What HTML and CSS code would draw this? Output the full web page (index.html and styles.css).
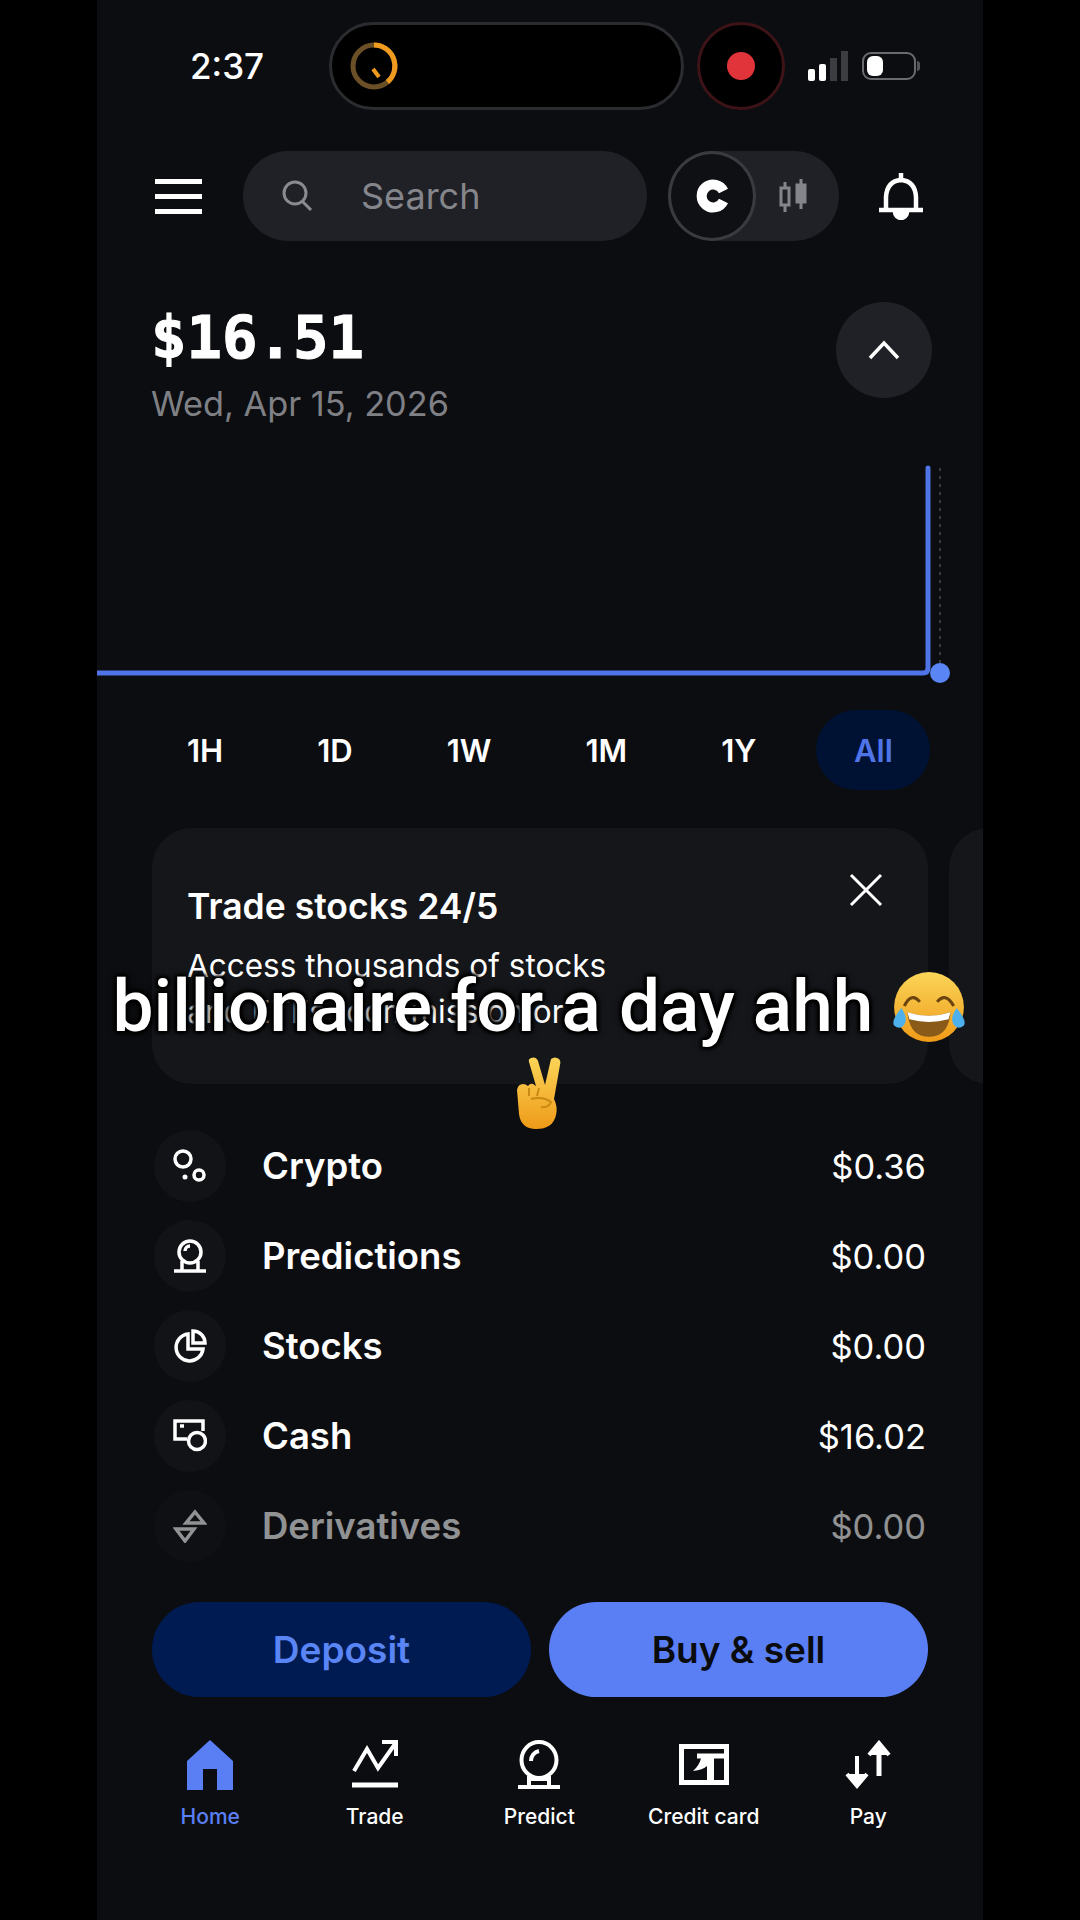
FILE: index.html
```html
<!DOCTYPE html>
<html lang="en">
<head>
  <meta charset="UTF-8">
  <meta name="viewport" content="width=device-width, initial-scale=1.0">
  <title>Home</title>
  <link rel="stylesheet" href="styles.css">
</head>
<body>
  <div class="screen">

    <div class="status">
      <span class="time">2:37</span>
      <div class="island">
        <svg class="ring" width="52" height="52" viewBox="0 0 52 52" fill="none">
          <circle cx="26" cy="26" r="21" stroke="#6b4f26" stroke-width="5"/>
          <path d="M26 5A21 21 0 0 1 39.5 42" stroke="#f09a1f" stroke-width="5"/>
          <path d="M25 29l6 8" stroke="#f09a1f" stroke-width="4"/>
        </svg>
      </div>
      <div class="rec"><span class="rec-dot"></span></div>
      <svg class="signal" width="40" height="30" viewBox="0 0 40 30">
        <rect x="0" y="18" width="7" height="12" rx="2" fill="#fff"/>
        <rect x="11" y="13" width="7" height="17" rx="2" fill="#fff"/>
        <rect x="22" y="7" width="7" height="23" fill="#3c3d40"/>
        <rect x="33" y="0" width="7" height="30" fill="#3c3d40"/>
      </svg>
      <div class="battery"><span class="battery-level"></span></div>
      <span class="battery-cap"></span>
    </div>

    <div class="topbar">
      <div class="menu"><span></span><span></span><span></span></div>
      <div class="search">
        <svg width="32" height="32" viewBox="0 0 32 32" fill="none" stroke="#8a8b90" stroke-width="3">
          <circle cx="14" cy="13" r="11"/>
          <path d="M21 21l9 9"/>
        </svg>
        <span>Search</span>
      </div>
      <div class="toggle">
        <div class="toggle-on">
          <svg width="34" height="34" viewBox="-2 0 34 34" fill="none">
            <path d="M26.5 12A11.5 11.5 0 1 0 26.5 22" stroke="#fff" stroke-width="10"/>
          </svg>
        </div>
        <svg class="candles" width="30" height="34" viewBox="0 0 30 34" fill="none" stroke="#84858a" stroke-width="3">
          <rect x="3" y="9" width="8" height="17"/>
          <path d="M7 3v6M7 26v7"/>
          <rect x="19" y="6" width="8" height="17" fill="#84858a"/>
          <path d="M23 0v6M23 23v7"/>
        </svg>
      </div>
      <svg class="bell" width="44" height="48" viewBox="0 0 44 48" fill="none" stroke="#fff" stroke-width="4.5">
        <path d="M22 1v7"/>
        <path d="M7 38V25Q8 9 22 8Q36 9 37 25V38"/>
        <path d="M0 38h44"/>
        <path d="M16 40a6 6 0 0 0 12 0z" fill="#fff"/>
      </svg>
    </div>

    <div class="balance">
      <div>
        <div class="amount">$16.51</div>
        <div class="date">Wed, Apr 15, 2026</div>
      </div>
      <div class="collapse">
        <svg width="32" height="20" viewBox="0 0 32 20" fill="none" stroke="#fff" stroke-width="3.5">
          <path d="M2 18L16 3l14 15"/>
        </svg>
      </div>
    </div>

    <svg class="chart" width="886" height="230" viewBox="0 0 886 230" fill="none">
      <path d="M843 8V213" stroke="#3a3b40" stroke-width="2" stroke-dasharray="3 5"/>
      <path d="M0 213H826Q831 213 831 208L831 8" stroke="#4f74e8" stroke-width="5" stroke-linecap="round"/>
      <circle cx="843" cy="213" r="10" fill="#5a85f5"/>
    </svg>

    <div class="ranges">
      <span class="range">1H</span>
      <span class="range">1D</span>
      <span class="range">1W</span>
      <span class="range">1M</span>
      <span class="range">1Y</span>
      <span class="range range-active">All</span>
    </div>

    <div class="promos">
      <div class="promo">
        <div class="promo-head">
          <div class="promo-title">Trade stocks 24/5</div>
          <svg width="34" height="34" viewBox="0 0 34 34" fill="none" stroke="#fff" stroke-width="3">
            <path d="M2 2l30 30M32 2L2 32"/>
          </svg>
        </div>
        <div class="promo-text">Access thousands of stocks<br>and ETFs (commission or</div>
      </div>
      <div class="promo promo-next"></div>
    </div>

    <div class="assets">
      <div class="asset">
        <div class="asset-icon">
          <svg width="34" height="34" viewBox="0 0 34 34" fill="none" stroke="#fff" stroke-width="3.5">
            <circle cx="10" cy="10" r="8"/>
            <circle cx="26" cy="26" r="5"/>
            <circle cx="12" cy="28" r="2.5" fill="#fff" stroke="none"/>
          </svg>
        </div>
        <span class="asset-name">Crypto</span>
        <span class="asset-value">$0.36</span>
      </div>
      <div class="asset">
        <div class="asset-icon">
          <svg width="34" height="34" viewBox="0 0 34 34" fill="none" stroke="#fff" stroke-width="3.5">
            <circle cx="17" cy="13" r="11"/>
            <path d="M12 12a5 5 0 0 1 5-5"/>
            <path d="M9 22v9M25 22v9M1 32h32"/>
          </svg>
        </div>
        <span class="asset-name">Predictions</span>
        <span class="asset-value">$0.00</span>
      </div>
      <div class="asset">
        <div class="asset-icon">
          <svg width="34" height="34" viewBox="0 0 34 34" fill="none" stroke="#fff" stroke-width="3.5">
            <path d="M15 5A13.5 13.5 0 1 0 30 20H15z"/>
            <path d="M20 2a12 12 0 0 1 12 12H20z"/>
          </svg>
        </div>
        <span class="asset-name">Stocks</span>
        <span class="asset-value">$0.00</span>
      </div>
      <div class="asset">
        <div class="asset-icon">
          <svg width="34" height="34" viewBox="0 0 34 34" fill="none" stroke="#fff" stroke-width="3.5">
            <path d="M14 20H2V2h28v10"/>
            <path d="M7 7h4"/>
            <circle cx="24" cy="22" r="8.5"/>
          </svg>
        </div>
        <span class="asset-name">Cash</span>
        <span class="asset-value">$16.02</span>
      </div>
      <div class="asset asset-faded">
        <div class="asset-icon">
          <svg width="34" height="34" viewBox="0 0 34 34" fill="none" stroke="#fff" stroke-width="3.5">
            <path d="M22 3l9 11H13z"/>
            <path d="M12 32L3 20h18z"/>
          </svg>
        </div>
        <span class="asset-name">Derivatives</span>
        <span class="asset-value">$0.00</span>
      </div>
    </div>

    <div class="actions">
      <div class="btn btn-deposit">Deposit</div>
      <div class="btn btn-buy">Buy &amp; sell</div>
    </div>

    <div class="tabs">
      <div class="tab tab-active">
        <svg width="46" height="50" viewBox="0 0 46 50">
          <path fill-rule="evenodd" fill="#5a7ff5" d="M23 0L46 21V50H30V29H16V50H0V21z"/>
        </svg>
        <span>Home</span>
      </div>
      <div class="tab">
        <svg width="46" height="50" viewBox="0 0 46 50" fill="none" stroke="#fff" stroke-width="4">
          <path d="M2 31L15 9l11 19L43 4"/>
          <path d="M30 2h14v14"/>
          <path d="M0 45h46" stroke-width="5"/>
        </svg>
        <span>Trade</span>
      </div>
      <div class="tab">
        <svg width="46" height="50" viewBox="0 0 46 50" fill="none" stroke="#fff" stroke-width="4">
          <ellipse cx="23" cy="20" rx="17.5" ry="18"/>
          <path d="M15 21a10 10 0 0 1 8-10"/>
          <path d="M13 36v11M33 36v11M2 47h42"/>
          <path d="M13 39h20"/>
        </svg>
        <span>Predict</span>
      </div>
      <div class="tab">
        <svg width="50" height="50" viewBox="0 0 50 50">
          <rect x="2.5" y="6.5" width="45" height="36" fill="none" stroke="#fff" stroke-width="5"/>
          <path fill="#fff" d="M18 13.5H45V18.5H35V45H28V26Q24 30 14 31Q20 26 22 18.5H18Z"/>
        </svg>
        <span>Credit card</span>
      </div>
      <div class="tab">
        <svg width="46" height="50" viewBox="0 0 46 50" fill="none" stroke="#fff" stroke-width="4">
          <path d="M12 16v30"/>
          <path d="M2 34l10 12 10-12" fill="#fff"/>
          <path d="M34 6v30" stroke-width="5"/>
          <path d="M24 15L34 3l10 12" fill="#fff"/>
        </svg>
        <span>Pay</span>
      </div>
    </div>

    <div class="caption">
      <div>billionaire for a day ahh
        <svg class="emoji" width="76" height="76" viewBox="0 0 74 74" role="img" aria-label="laughing with tears">
          <defs>
            <linearGradient id="face" x1="0" y1="0" x2="0" y2="1">
              <stop offset="0" stop-color="#fbd558"/>
              <stop offset="1" stop-color="#ef9a18"/>
            </linearGradient>
          </defs>
          <circle cx="37" cy="37" r="34" fill="url(#face)"/>
          <path d="M13 36q7-14 15-4M45 32q8-10 16 4" fill="none" stroke="#6b4410" stroke-width="3"/>
          <path d="M16 42q21 7 42 0q-2 24-21 24t-21-24z" fill="#8a5a18"/>
          <path d="M16 42q21 7 42 0l-2 7q-19 5-38 0z" fill="#fff"/>
          <path d="M10 38q7 10 3 16t-10 1q-3-5 7-17z" fill="#4fb1ec"/>
          <path d="M64 38q-7 10-3 16t10 1q3-5-7-17z" fill="#4fb1ec"/>
        </svg>
      </div>
      <div class="caption-second">
        <svg class="emoji" width="50" height="74" viewBox="0 0 50 74" role="img" aria-label="victory hand">
          <path fill="url(#face)" d="M16 2q5-2 7 3l7 24 6-26q4-3 8 0 2 2 1 6l-6 34q4 8 2 16-3 14-20 14Q6 73 4 58L2 34q1-6 6-6 3 0 5 2 2-3 5-2l3 2-7-24q-1-3 2-4z"/>
          <path d="M14 32v8M24 32l-2 8M16 43q12-3 20 3q-2 6-10 5" fill="none" stroke="#c98a14" stroke-width="2"/>
        </svg>
      </div>
    </div>

  </div>
</body>
</html>
```

FILE: styles.css
```css
* {
  box-sizing: border-box;
}
body {
  margin: 0;
  background: #000;
  font-family: Inter, "Liberation Sans", sans-serif;
  color: #fff;
}
.screen {
  position: relative;
  width: 886px;
  height: 1920px;
  margin: 0 auto;
  background: #0c0d10;
  overflow: hidden;
}

/* status bar */
.status {
  display: flex;
  align-items: center;
  height: 88px;
  margin-top: 22px;
  padding-left: 93px;
}
.time {
  width: 139px;
  font-size: 35px;
  font-weight: 500;
}
.island {
  display: flex;
  align-items: center;
  width: 355px;
  height: 88px;
  padding-left: 16px;
  background: #000;
  border: 3px solid #2b2c30;
  border-radius: 44px;
}
.rec {
  display: flex;
  align-items: center;
  justify-content: center;
  width: 88px;
  height: 88px;
  margin-left: 13px;
  background: #000;
  border: 3px solid #3d1318;
  border-radius: 50%;
}
.rec-dot {
  width: 28px;
  height: 28px;
  background: #e0343a;
  border-radius: 50%;
}
.signal {
  margin-left: 23px;
}
.battery {
  display: flex;
  align-items: center;
  width: 54px;
  height: 28px;
  margin-left: 14px;
  padding-left: 3px;
  border: 2px solid #6a6b6e;
  border-radius: 9px;
}
.battery-level {
  width: 16px;
  height: 20px;
  background: #fff;
  border-radius: 6px;
}
.battery-cap {
  width: 3px;
  height: 10px;
  margin-left: 1px;
  background: #55565a;
  border-radius: 0 3px 3px 0;
}

/* search row */
.topbar {
  display: flex;
  align-items: center;
  height: 90px;
  margin-top: 41px;
  padding-left: 58px;
}
.menu {
  display: flex;
  flex-direction: column;
  gap: 10px;
  width: 47px;
}
.menu span {
  height: 5px;
  background: #fff;
}
.search {
  display: flex;
  align-items: center;
  gap: 48px;
  width: 404px;
  height: 90px;
  margin-left: 41px;
  padding-left: 38px;
  background: #202126;
  border-radius: 45px;
  font-size: 36px;
  color: #85868b;
}
.toggle {
  display: flex;
  align-items: center;
  width: 171px;
  height: 90px;
  margin-left: 21px;
  background: #202126;
  border-radius: 45px;
}
.toggle-on {
  display: flex;
  align-items: center;
  justify-content: center;
  width: 88px;
  height: 90px;
  background: #0f1013;
  border: 3px solid #3a3b40;
  border-radius: 50%;
}
.candles {
  margin-left: 22px;
}
.bell {
  margin-left: 40px;
}

/* balance */
.balance {
  display: flex;
  justify-content: space-between;
  align-items: flex-start;
  height: 158px;
  margin-top: 61px;
  padding: 0 51px 0 54px;
}
.amount {
  font-family: "DejaVu Sans Mono", monospace;
  font-size: 59px;
  font-weight: 700;
  line-height: 66px;
  margin-top: 3px;
  -webkit-text-stroke: 1px #fff;
}
.date {
  margin-top: 13px;
  font-size: 34.3px;
  line-height: 40px;
  color: #7f8085;
}
.collapse {
  display: flex;
  align-items: center;
  justify-content: center;
  width: 96px;
  height: 96px;
  background: #202126;
  border-radius: 50%;
}
.chart {
  display: block;
}

/* range picker, the labels sit at equal gaps so wider ones push the rest */
.ranges {
  display: flex;
  align-items: center;
  gap: 58px;
  height: 80px;
  margin-top: 20px;
  padding-left: 72px;
}
.range {
  display: flex;
  align-items: center;
  justify-content: center;
  height: 80px;
  padding: 0 18px;
  font-size: 31px;
  font-weight: 600;
}
.range-active {
  width: 114px;
  margin-left: -16px;
  padding: 0;
  background: #001233;
  border-radius: 40px;
  color: #4f74e8;
}

/* promo cards */
.promos {
  display: flex;
  gap: 21px;
  margin-top: 38px;
  padding-left: 55px;
}
.promo {
  flex: none;
  width: 776px;
  height: 256px;
  padding: 46px 45px 46px 35px;
  background: #15161a;
  border-radius: 40px;
}
.promo-next {
  width: 80px;
}
.promo-head {
  display: flex;
  justify-content: space-between;
  align-items: flex-start;
}
.promo-head svg {
  margin: -1px 0 0;
}
.promo-title {
  margin-top: 13px;
  font-size: 35.5px;
  font-weight: 600;
  line-height: 40px;
}
.promo-text {
  margin-top: 16px;
  font-size: 31.5px;
  line-height: 46px;
}

/* assets */
.assets {
  margin-top: 37px;
  padding: 0 57px 0 57px;
}
.asset {
  display: flex;
  align-items: center;
  height: 90px;
}
.asset-icon {
  display: flex;
  align-items: center;
  justify-content: center;
  width: 72px;
  height: 72px;
  background: #121317;
  border-radius: 50%;
}
.asset-name {
  flex: 1;
  margin-left: 36px;
  font-size: 36.5px;
  font-weight: 600;
}
.asset-value {
  font-size: 34.5px;
}
.asset-faded {
  opacity: 0.55;
}

/* action buttons */
.actions {
  display: flex;
  gap: 18px;
  margin-top: 31px;
  padding: 0 55px;
}
.btn {
  display: flex;
  align-items: center;
  justify-content: center;
  flex: 1;
  height: 95px;
  border-radius: 48px;
  font-size: 37px;
  font-weight: 600;
}
.btn-deposit {
  background: #001a52;
  color: #5a85f5;
}
.btn-buy {
  background: #5a7ff5;
  color: #0a0b0d;
}

/* bottom nav */
.tabs {
  display: flex;
  margin-top: 43px;
  padding-left: 31px;
}
.tab {
  display: flex;
  flex-direction: column;
  align-items: center;
  justify-content: space-between;
  width: 164.5px;
  height: 89px;
  font-size: 21px;
  font-weight: 500;
}
.tab svg {
  flex: none;
}
.tab-active {
  color: #5a7ff5;
}

/* video caption */
.caption {
  position: absolute;
  top: 964px;
  left: 0;
  width: 100%;
  text-align: center;
  font-family: Roboto, "Liberation Sans", sans-serif;
  font-size: 73px;
  font-weight: 500;
  line-height: 84px;
  white-space: nowrap;
  text-shadow: 2px 2px 3px #000, -2px -2px 3px #000, 2px -2px 3px #000, -2px 2px 3px #000, 0 0 8px #000;
}
.emoji {
  vertical-align: -14px;
}
.caption-second {
  line-height: 0;
  margin-top: 8px;
}
```
